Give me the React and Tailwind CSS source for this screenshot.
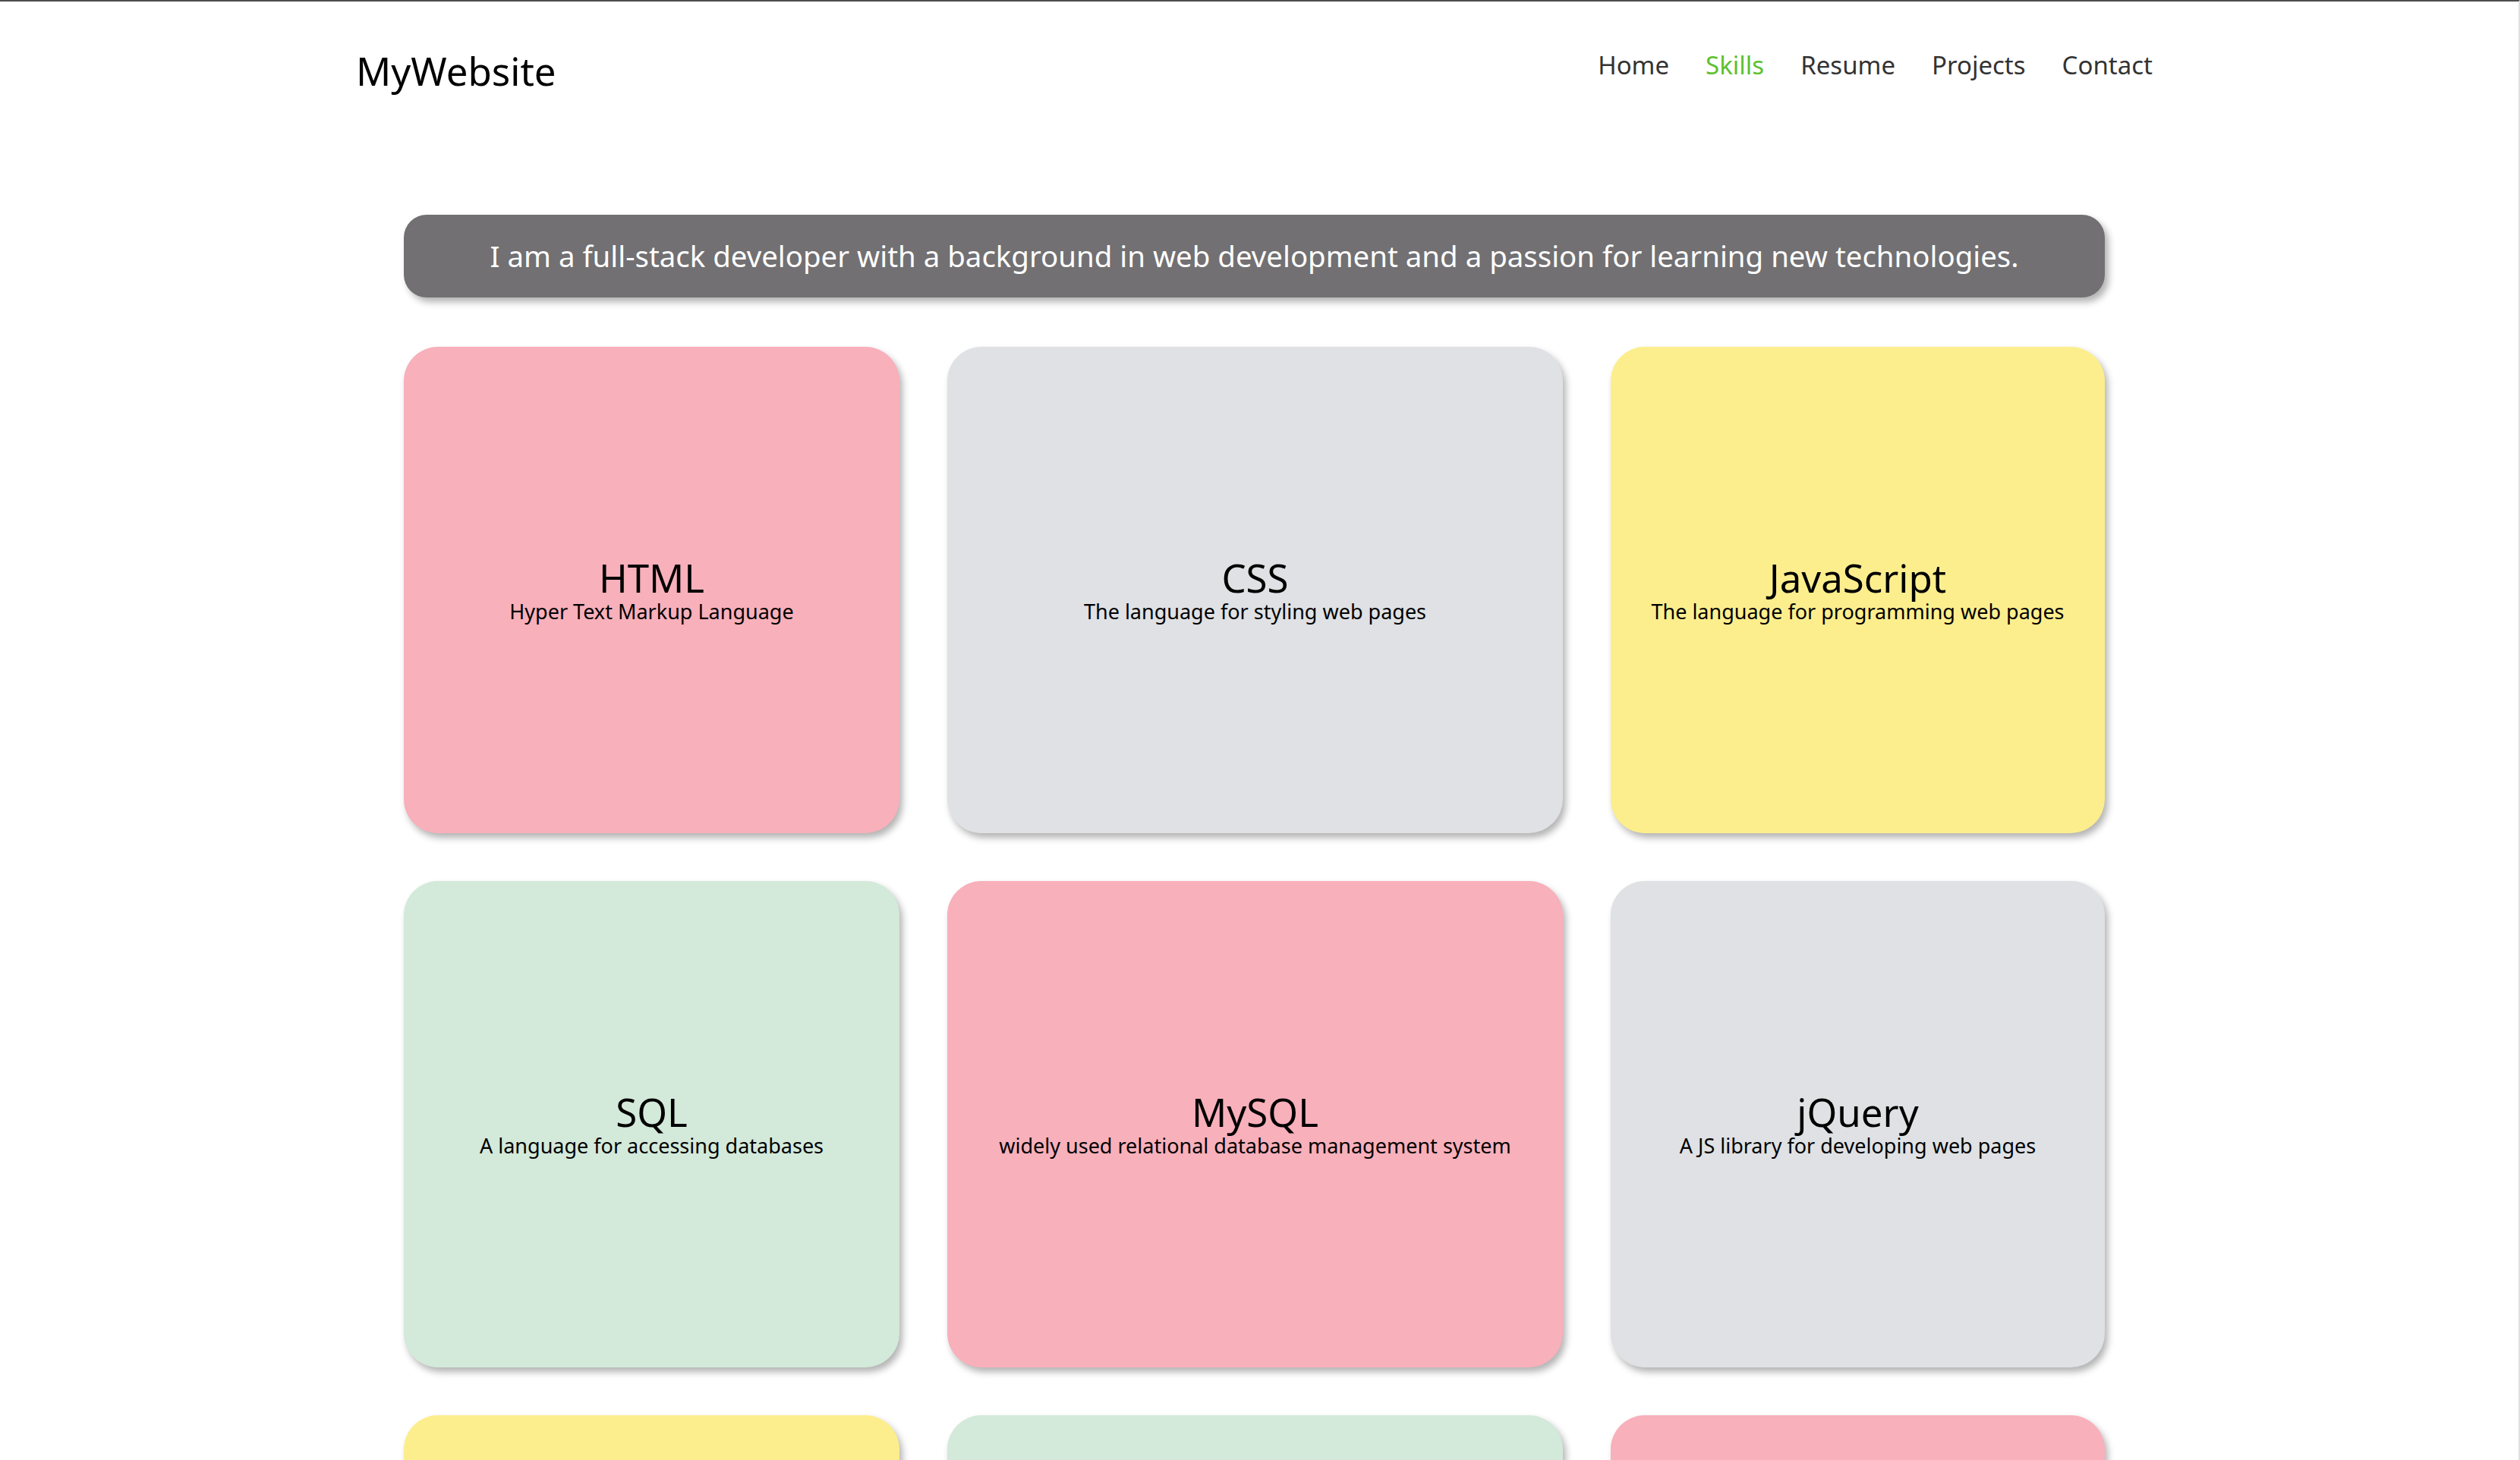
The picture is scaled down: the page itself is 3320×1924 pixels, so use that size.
const NAV = ['Home', 'Skills', 'Resume', 'Projects', 'Contact']

const SKILLS = [
  { name: 'HTML', desc: 'Hyper Text Markup Language', bg: 'bg-[#f8b0bb]' },
  { name: 'CSS', desc: 'The language for styling web pages', bg: 'bg-[#dfe1e4]' },
  { name: 'JavaScript', desc: 'The language for programming web pages', bg: 'bg-[#fdee8d]' },
  { name: 'SQL', desc: 'A language for accessing databases', bg: 'bg-[#d3e9da]' },
  { name: 'MySQL', desc: 'widely used relational database management system', bg: 'bg-[#f8b0bb]' },
  { name: 'jQuery', desc: 'A JS library for developing web pages', bg: 'bg-[#dfe1e4]' },
  { name: 'Bootstrap', desc: 'A framework for responsive websites', bg: 'bg-[#fdee8d]' },
  { name: 'React', desc: 'A JS library for building user interfaces', bg: 'bg-[#d3e9da]' },
  { name: 'Node.js', desc: 'A JavaScript runtime environment', bg: 'bg-[#f8b0bb]' },
]

function SkillCard({ skill }) {
  return (
    <div
      className={`h-[641px] rounded-[45px] ${skill.bg} shadow-[4px_6px_10px_rgba(0,0,0,0.3)] flex flex-col items-center justify-center text-black`}
    >
      <h3 className="text-[51px] leading-[56px]">{skill.name}</h3>
      <p className="text-[27px] leading-[34px]">{skill.desc}</p>
    </div>
  )
}

export default function App() {
  return (
    <div className="min-h-screen bg-white border-t-2 border-t-[#4d4d4d] pr-[13px] border-r-2 border-r-[#e0e0e0] font-['Noto_Sans',sans-serif] overflow-hidden">
      <div className="flex flex-col items-center">
        {/* Header */}
        <header className="w-[2367px] pt-[66px] flex items-start justify-between">
          <div className="text-[51px] leading-none text-black">MyWebsite</div>
          <nav className="flex items-start gap-[48px] text-[33px] leading-none text-[#333333] pt-[1px]">
            {NAV.map(item => (
              <a key={item} className={item === 'Skills' ? 'text-[#5cc12e]' : ''}>
                {item}
              </a>
            ))}
          </nav>
        </header>

        <main className="w-[2241px] mt-[164px] pb-[64px]">
          {/* Intro banner */}
          <div className="h-[109px] rounded-[30px] bg-[#727072] shadow-[5px_6px_10px_rgba(0,0,0,0.3)] flex items-center justify-center">
            <p className="text-white text-[38.4px]">
              I am a full-stack developer with a background in web development and a passion for learning new technologies.
            </p>
          </div>

          {/* Skill cards */}
          <div className="mt-[65px] grid grid-cols-[653px_811px_651px] gap-x-[63px] gap-y-[63px]">
            {SKILLS.map(skill => (
              <SkillCard key={skill.name} skill={skill} />
            ))}
          </div>
        </main>
      </div>
    </div>
  )
}
